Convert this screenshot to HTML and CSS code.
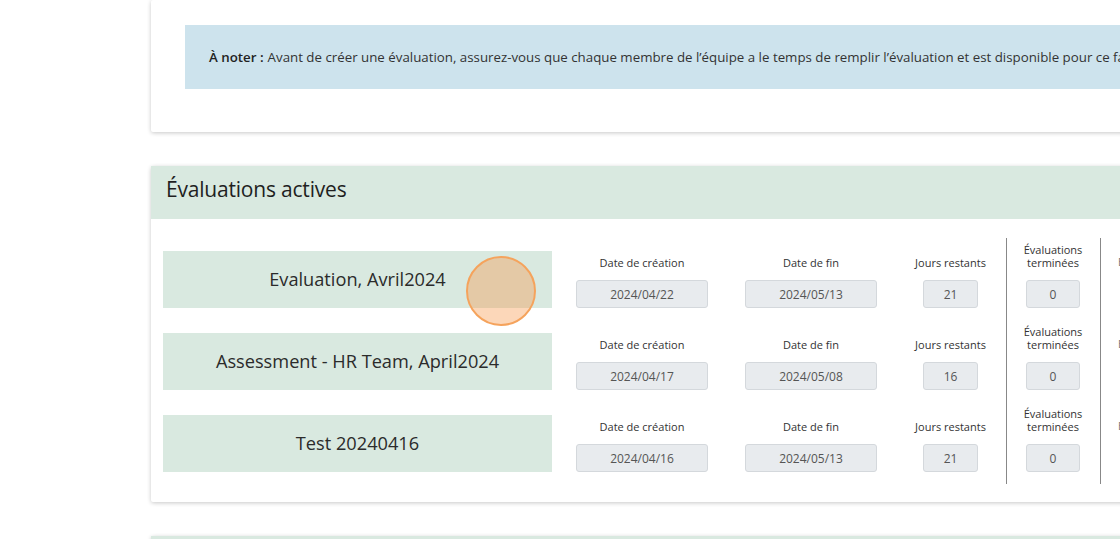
FILE: index.html
```html
<!DOCTYPE html>
<html lang="fr">
<head>
<meta charset="utf-8">
<title>Évaluations</title>
<link rel="stylesheet" href="styles.css">
</head>
<body>
<div class="page">
  <section class="card card-note">
    <div class="note"><strong>À noter :</strong> Avant de créer une évaluation, assurez-vous que chaque membre de l’équipe a le temps de remplir l’évaluation et est disponible pour ce faire.</div>
  </section>

  <section class="card card-active">
    <header class="card-head"><h2>Évaluations actives</h2></header>
    <div class="card-body">
      <div class="row">
        <div class="name">Evaluation, Avril2024</div>
        <div class="cell c-create"><span class="lbl">Date de création</span><span class="val">2024/04/22</span></div>
        <div class="cell c-end"><span class="lbl">Date de fin</span><span class="val">2024/05/13</span></div>
        <div class="cell c-days"><span class="lbl">Jours restants</span><span class="val">21</span></div>
        <div class="cell c-done"><span class="lbl">Évaluations<br>terminées</span><span class="val">0</span></div>
        <div class="cell c-more"><span class="lbl">Évaluations</span></div>
      </div>
      <div class="row">
        <div class="name">Assessment - HR Team, April2024</div>
        <div class="cell c-create"><span class="lbl">Date de création</span><span class="val">2024/04/17</span></div>
        <div class="cell c-end"><span class="lbl">Date de fin</span><span class="val">2024/05/08</span></div>
        <div class="cell c-days"><span class="lbl">Jours restants</span><span class="val">16</span></div>
        <div class="cell c-done"><span class="lbl">Évaluations<br>terminées</span><span class="val">0</span></div>
        <div class="cell c-more"><span class="lbl">Évaluations</span></div>
      </div>
      <div class="row">
        <div class="name">Test 20240416</div>
        <div class="cell c-create"><span class="lbl">Date de création</span><span class="val">2024/04/16</span></div>
        <div class="cell c-end"><span class="lbl">Date de fin</span><span class="val">2024/05/13</span></div>
        <div class="cell c-days"><span class="lbl">Jours restants</span><span class="val">21</span></div>
        <div class="cell c-done"><span class="lbl">Évaluations<br>terminées</span><span class="val">0</span></div>
        <div class="cell c-more"><span class="lbl">Évaluations</span></div>
      </div>
    </div>
  </section>

  <section class="card card-next">
    <header class="card-head"><h2>&nbsp;</h2></header>
  </section>
</div>
<div class="cursor"></div>
</body>
</html>
```

FILE: styles.css
```css
html, body {
  margin: 0;
  padding: 0;
  background: #ffffff;
  overflow: hidden;
  height: 539px;
  width: 1120px;
}
body {
  font-family: "Open Sans", "Noto Sans", "Liberation Sans", sans-serif;
  color: #333;
  position: relative;
}
.page {
  padding-left: 151px;
  display: flex;
  flex-direction: column;
  gap: 34px;
  width: 1200px;
}
.card {
  background: #fff;
  box-shadow: 0 1px 4px rgba(0, 0, 0, 0.22);
  border-radius: 2px;
}
.card-note {
  padding: 25px 0 43px 34px;
}
.note {
  background: #cde3ed;
  height: 64px;
  display: flex;
  align-items: center;
  padding-left: 24px;
  font-size: 13.3px;
  color: #333;
  white-space: nowrap;
}
.note strong {
  font-weight: 600;
  color: #222;
  margin-right: 4px;
}
.card-head {
  background: #d9e9e0;
  height: 53px;
  box-sizing: border-box;
  display: flex;
  align-items: center;
  padding-left: 15px;
  padding-bottom: 7px;
}
.card-head h2 {
  margin: 0;
  font-size: 21px;
  font-weight: 500;
  color: #1f1f1f;
  letter-spacing: -0.2px;
}
.card-body {
  padding: 19px 0 18px 12px;
}
.row {
  display: flex;
  height: 82px;
}
.name {
  width: 389px;
  height: 57px;
  align-self: center;
  background: #d9e9e0;
  display: flex;
  align-items: center;
  justify-content: center;
  font-size: 18.2px;
  color: #2b2b2b;
}
.cell {
  display: flex;
  flex-direction: column;
  align-items: center;
  justify-content: flex-end;
  padding-bottom: 12px;
  box-sizing: border-box;
}
.lbl {
  font-size: 11px;
  line-height: 13px;
  text-align: center;
  white-space: nowrap;
  color: #333;
  margin-bottom: 11px;
}
.val {
  box-sizing: border-box;
  height: 28px;
  display: flex;
  align-items: center;
  justify-content: center;
  background: #e8ebee;
  border: 1px solid #d4d8dc;
  border-radius: 3px;
  font-size: 12px;
  color: #555;
  width: 100%;
}
.c-create { width: 132px; margin-left: 24px; }
.c-end { width: 132px; margin-left: 37px; }
.c-days { width: 55px; margin-left: 46px; }
.c-done {
  margin-left: 28px;
  border-left: 1px solid #888;
  padding-left: 19px;
  padding-right: 20px;
  width: 94px;
}
.c-done .val { width: 54px; }
.c-more {
  border-left: 1px solid #888;
  width: 100px;
  align-items: flex-start;
  padding-left: 17px;
  justify-content: flex-start;
  padding-top: 17px;
}
.c-more .lbl { color: #777; }
.card-next {
  height: 80px;
}
.cursor {
  position: absolute;
  left: 466px;
  top: 256px;
  width: 70px;
  height: 70px;
  box-sizing: border-box;
  border-radius: 50%;
  border: 2px solid #f5a35c;
  background: rgba(247, 150, 70, 0.38);
}
```
